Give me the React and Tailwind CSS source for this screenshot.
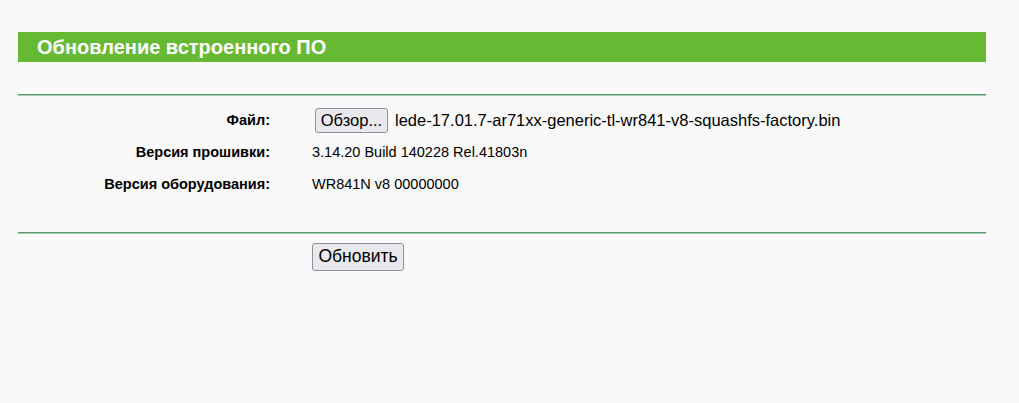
export default function App() {
  return (
    <div className="w-[1019px] h-[403px] bg-[#f9f9f9] overflow-hidden" style={{ fontFamily: '"Liberation Sans", Arial, sans-serif' }}>
      <div className="pt-[32px] pl-[18px] w-[986px]">
        <div className="h-[30px] bg-[#66b933] flex items-center pl-[19px]">
          <span className="text-white font-bold text-[20px] leading-none">Обновление встроенного ПО</span>
        </div>
        <div className="h-[32px]" />
        <div className="h-[1px] bg-[#5a9a73]" />
        <div className="h-[1px] bg-[#a8cdb5]" />
        <div className="grid grid-cols-[252px_1fr] gap-x-[42px] items-center text-[14.5px] text-black pt-[12px]">
          <div className="text-right font-bold h-[25px] flex items-center justify-end">Файл:</div>
          <div className="flex items-center gap-[7px] h-[25px]">
            <button className="h-[25px] w-[73px] px-[4px] rounded-[3px] border border-[#8f8f9d] bg-[#e9e9ed] text-[16.5px] leading-none text-black ml-[3px]">Обзор...</button>
            <span className="text-[16.5px]">lede-17.01.7-ar71xx-generic-tl-wr841-v8-squashfs-factory.bin</span>
          </div>
          <div className="text-right font-bold h-[32px] flex items-center justify-end mt-[4px]">Версия прошивки:</div>
          <div className="h-[32px] flex items-center mt-[4px]">3.14.20 Build 140228 Rel.41803n</div>
          <div className="text-right font-bold h-[32px] flex items-center justify-end">Версия оборудования:</div>
          <div className="h-[32px] flex items-center">WR841N v8 00000000</div>
        </div>
        <div className="h-[31px]" />
        <div className="h-[1px] bg-[#5a9a73]" />
        <div className="h-[1px] bg-[#a8cdb5]" />
        <div className="pl-[294px] pt-[9px]">
          <button className="h-[28px] w-[92px] px-[4px] rounded-[3px] border border-[#8f8f9d] bg-[#e9e9ed] text-[17.5px] leading-none text-black">Обновить</button>
        </div>
      </div>
    </div>
  );
}
